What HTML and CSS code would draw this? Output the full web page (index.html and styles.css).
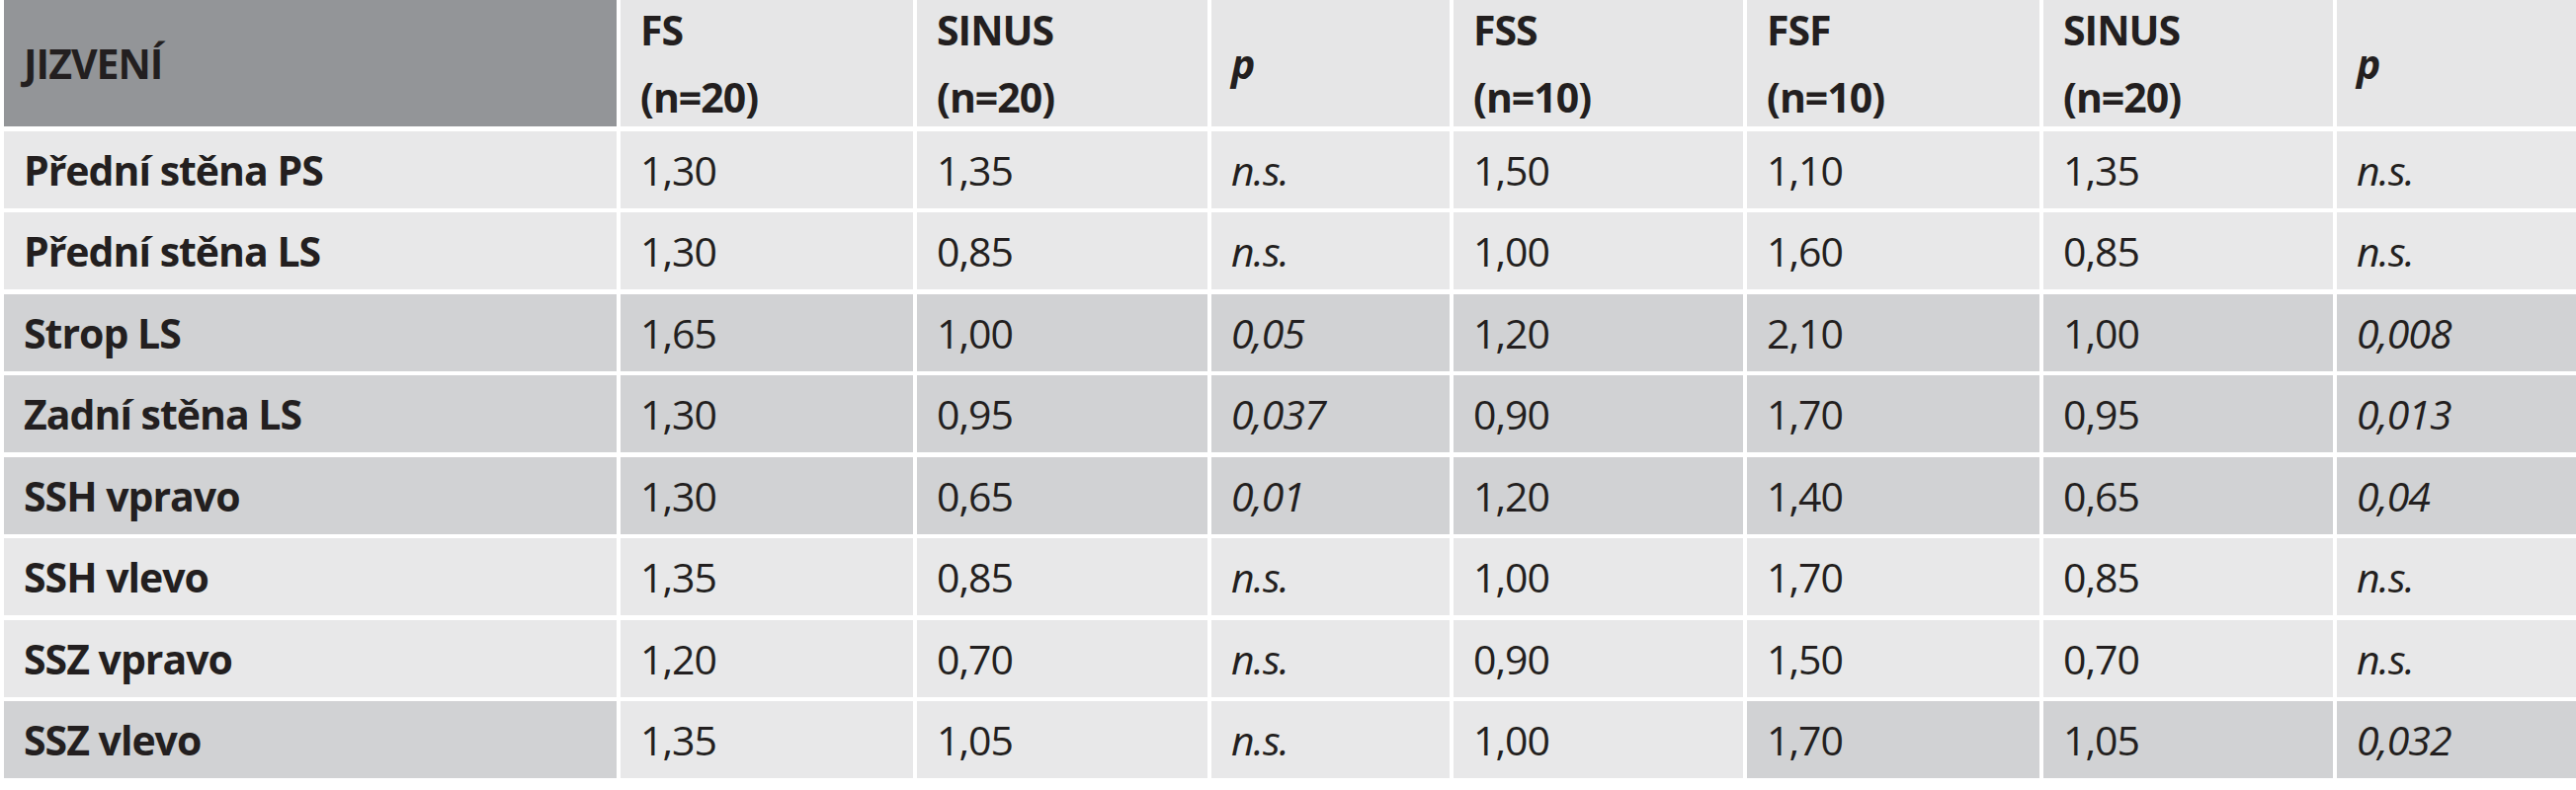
FILE: index.html
```html
<!DOCTYPE html>
<html lang="cs">
<head>
<meta charset="utf-8">
<title>Jizvení</title>
<link rel="stylesheet" href="styles.css">
</head>
<body>
<div class="table">
  <div class="cell head head-main">JIZVENÍ</div>
  <div class="cell head"><span>FS<br>(n=20)</span></div>
  <div class="cell head"><span>SINUS<br>(n=20)</span></div>
  <div class="cell head pcol">p</div>
  <div class="cell head"><span>FSS<br>(n=10)</span></div>
  <div class="cell head"><span>FSF<br>(n=10)</span></div>
  <div class="cell head"><span>SINUS<br>(n=20)</span></div>
  <div class="cell head pcol">p</div>

  <div class="cell label light">Přední stěna PS</div>
  <div class="cell light">1,30</div>
  <div class="cell light">1,35</div>
  <div class="cell light it">n.s.</div>
  <div class="cell light">1,50</div>
  <div class="cell light">1,10</div>
  <div class="cell light">1,35</div>
  <div class="cell light it">n.s.</div>

  <div class="cell label light">Přední stěna LS</div>
  <div class="cell light">1,30</div>
  <div class="cell light">0,85</div>
  <div class="cell light it">n.s.</div>
  <div class="cell light">1,00</div>
  <div class="cell light">1,60</div>
  <div class="cell light">0,85</div>
  <div class="cell light it">n.s.</div>

  <div class="cell label dark">Strop LS</div>
  <div class="cell dark">1,65</div>
  <div class="cell dark">1,00</div>
  <div class="cell dark it">0,05</div>
  <div class="cell dark">1,20</div>
  <div class="cell dark">2,10</div>
  <div class="cell dark">1,00</div>
  <div class="cell dark it">0,008</div>

  <div class="cell label dark">Zadní stěna LS</div>
  <div class="cell dark">1,30</div>
  <div class="cell dark">0,95</div>
  <div class="cell dark it">0,037</div>
  <div class="cell dark">0,90</div>
  <div class="cell dark">1,70</div>
  <div class="cell dark">0,95</div>
  <div class="cell dark it">0,013</div>

  <div class="cell label dark">SSH vpravo</div>
  <div class="cell dark">1,30</div>
  <div class="cell dark">0,65</div>
  <div class="cell dark it">0,01</div>
  <div class="cell dark">1,20</div>
  <div class="cell dark">1,40</div>
  <div class="cell dark">0,65</div>
  <div class="cell dark it">0,04</div>

  <div class="cell label light">SSH vlevo</div>
  <div class="cell light">1,35</div>
  <div class="cell light">0,85</div>
  <div class="cell light it">n.s.</div>
  <div class="cell light">1,00</div>
  <div class="cell light">1,70</div>
  <div class="cell light">0,85</div>
  <div class="cell light it">n.s.</div>

  <div class="cell label light">SSZ vpravo</div>
  <div class="cell light">1,20</div>
  <div class="cell light">0,70</div>
  <div class="cell light it">n.s.</div>
  <div class="cell light">0,90</div>
  <div class="cell light">1,50</div>
  <div class="cell light">0,70</div>
  <div class="cell light it">n.s.</div>

  <div class="cell label dark">SSZ vlevo</div>
  <div class="cell light">1,35</div>
  <div class="cell light">1,05</div>
  <div class="cell light it">n.s.</div>
  <div class="cell light">1,00</div>
  <div class="cell dark">1,70</div>
  <div class="cell dark">1,05</div>
  <div class="cell dark it">0,032</div>
</div>
</body>
</html>
```
FILE: styles.css
```css
html, body {
  margin: 0;
  padding: 0;
  background: #ffffff;
}

body {
  font-family: "Open Sans", "Noto Sans", "DejaVu Sans", sans-serif;
  font-size: 41px;
  color: #231f20;
}

.table {
  display: grid;
  grid-template-columns: 620px 296px 294px 241px 293px 296px 293px 1fr;
  grid-template-rows: 128px repeat(8, 78px);
  column-gap: 4px;
  row-gap: 4.5px;
  margin-left: 4px;
}

.cell {
  display: flex;
  align-items: center;
  padding-left: 20px;
  white-space: nowrap;
  letter-spacing: -1px;
}

.head {
  background: #e6e6e7;
  font-weight: 700;
  line-height: 68px;
}

.head-main {
  background: #939598;
}

.pcol {
  font-style: italic;
}

.label {
  font-weight: 700;
}

.light {
  background: #e8e8e9;
}

.dark {
  background: #d1d2d4;
}

.it {
  font-style: italic;
}
```
